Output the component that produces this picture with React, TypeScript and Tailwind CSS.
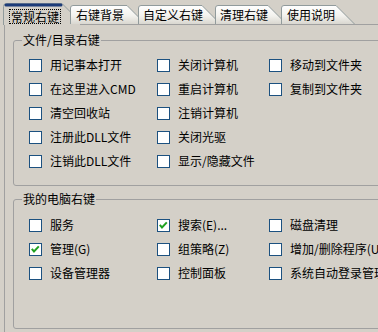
import React from 'react';

function Check({ checked }: { checked?: boolean }) {
  return (
    <span className="relative block w-[13px] h-[13px] flex-none border border-[#1c5180] bg-white">
      {checked && (
        <svg className="absolute left-0 top-0" width="11" height="11" viewBox="0 0 11 11">
          <path d="M1.8 4.8 L4 7.4 L8.8 2.4" stroke="#21a121" strokeWidth="2" fill="none" />
        </svg>
      )}
    </span>
  );
}

function Item({ label, checked }: { label?: string; checked?: boolean }) {
  if (!label) return <div className="h-[24px]" />;
  return (
    <div className="flex items-center h-[24px] whitespace-nowrap">
      <Check checked={checked} />
      <span className="ml-[8px] leading-[14px]">{label}</span>
    </div>
  );
}

function TabShape({ s, id }: { s: number; id: string }) {
  const w = s + 20;
  return (
    <svg className="absolute left-0 top-0" width={w} height="19" viewBox={`0 0 ${w} 19`}>
      <defs>
        <linearGradient id={id} x1="0" y1="0" x2="0" y2="1">
          <stop offset="0" stopColor="#ffffff" />
          <stop offset="0.55" stopColor="#f3f2ee" />
          <stop offset="1" stopColor="#d9d7d0" />
        </linearGradient>
      </defs>
      <path d={`M0.5 19 V3 Q0.5 0.5 3 0.5 H${s} L${s + 18.5} 19 Z`} fill={`url(#${id})`} />
      <path d={`M0.5 19 V3 Q0.5 0.5 3 0.5 H${s} L${s + 18.5} 19`} fill="none" stroke="#919b9c" />
    </svg>
  );
}

const group1: [string, boolean?][] = [
  ['用记事本打开'], ['关闭计算机'], ['移动到文件夹'],
  ['在这里进入CMD'], ['重启计算机'], ['复制到文件夹'],
  ['清空回收站'], ['注销计算机'], [''],
  ['注册此DLL文件'], ['关闭光驱'], [''],
  ['注销此DLL文件'], ['显示/隐藏文件'], [''],
];

const group2: [string, boolean?][] = [
  ['服务'], ['搜索(E)...', true], ['磁盘清理'],
  ['管理(G)', true], ['组策略(Z)'], ['增加/删除程序(U)'],
  ['设备管理器'], ['控制面板'], ['系统自动登录管理'],
];

export default function App() {
  return (
    <div className="w-[378px] h-[332px] overflow-hidden bg-[#d4d0c8] text-black text-[12px] [font-family:SimSun,'Noto_Sans_CJK_SC',sans-serif]">
      {/* tab strip */}
      <div className="flex items-end h-[24px] pl-[3px]">
        <div className="relative z-10 w-[77px] h-[22px] mb-[-1px] flex-none">
          <svg className="absolute left-0 top-0" width="77" height="22" viewBox="0 0 77 22">
            <path d="M0.5 22 V3.5 Q0.5 0.5 3.5 0.5 H59 L77 18.5 V22 Z" fill="#d4d0c8" />
            <path d="M0.5 22 V3.5 Q0.5 0.5 3.5 0.5 H59 L77 18.5" fill="none" stroke="#919b9c" />
            <rect x="1.5" y="0.5" width="58" height="3" rx="1.5" fill="#1c3b78" />
          </svg>
          <div className="relative pl-[6px] pt-[5px]">
            <span className="inline-block border border-dotted border-black px-[1px] leading-[13px] whitespace-nowrap">常规右键</span>
          </div>
        </div>
        <div className="relative z-20 w-[77px] h-[19px] ml-[-10px] flex-none">
          <TabShape s={57} id="g2" />
          <div className="relative pl-[6px] pt-[3px] leading-[14px] whitespace-nowrap">右键背景</div>
        </div>
        <div className="relative z-30 w-[84px] h-[19px] ml-[-9px] flex-none">
          <TabShape s={64} id="g3" />
          <div className="relative pl-[5px] pt-[3px] leading-[14px] whitespace-nowrap">自定义右键</div>
        </div>
        <div className="relative z-40 w-[73px] h-[19px] ml-[-7px] flex-none">
          <TabShape s={53} id="g4" />
          <div className="relative pl-[5px] pt-[3px] leading-[14px] whitespace-nowrap">清理右键</div>
        </div>
        <div className="relative z-50 w-[75px] h-[19px] ml-[-7px] flex-none">
          <TabShape s={55} id="g5" />
          <div className="relative pl-[6px] pt-[3px] leading-[14px] whitespace-nowrap">使用说明</div>
        </div>
      </div>

      {/* panel */}
      <div className="ml-[4px] h-[320px] border-l border-t border-[#a0a0a0] pl-[8px] pt-[15px]">
        <div className="relative w-[420px] border border-[#a0a0a0] rounded-[3px] pt-[12px] pb-[12px] pl-[15px]">
          <span className="absolute top-[-9px] left-[8px] px-[1px] bg-[#d4d0c8] leading-[16px] whitespace-nowrap">文件/目录右键</span>
          <div className="grid grid-cols-[128px_112px_1fr]">
            {group1.map(([l, c], i) => (
              <Item key={i} label={l} checked={c} />
            ))}
          </div>
        </div>
        <div className="relative w-[420px] mt-[13px] border border-[#a0a0a0] rounded-[3px] pt-[13px] pb-[43px] pl-[15px]">
          <span className="absolute top-[-9px] left-[8px] px-[1px] bg-[#d4d0c8] leading-[16px] whitespace-nowrap">我的电脑右键</span>
          <div className="grid grid-cols-[128px_112px_1fr]">
            {group2.map(([l, c], i) => (
              <Item key={i} label={l} checked={c} />
            ))}
          </div>
        </div>
      </div>
    </div>
  );
}
